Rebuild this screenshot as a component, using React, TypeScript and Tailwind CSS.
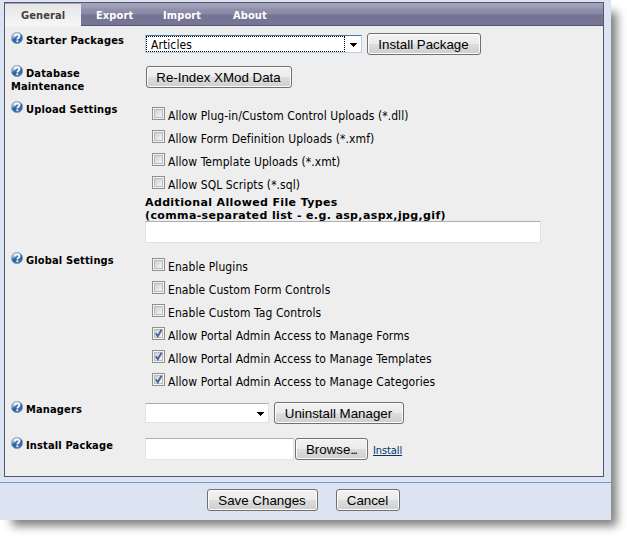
import type { ReactNode } from "react";
import clsx from "clsx";

const tabs = [
  { name: "Export", style: "ml-[15px] w-[38px]" },
  { name: "Import", style: "ml-[29px] w-[41px]" },
  { name: "About", style: "ml-[29px] w-[36px]" },
];

const uploadSettings = [
  { label: "Allow Plug-in/Custom Control Uploads (*.dll)", checked: false },
  { label: "Allow Form Definition Uploads (*.xmf)", checked: false },
  { label: "Allow Template Uploads (*.xmt)", checked: false },
  { label: "Allow SQL Scripts (*.sql)", checked: false },
];

const globalSettings = [
  { label: "Enable Plugins", checked: false },
  { label: "Enable Custom Form Controls", checked: false },
  { label: "Enable Custom Tag Controls", checked: false },
  { label: "Allow Portal Admin Access to Manage Forms", checked: true },
  { label: "Allow Portal Admin Access to Manage Templates", checked: true },
  { label: "Allow Portal Admin Access to Manage Categories", checked: true },
];

function HelpIcon() {
  return (
    <svg className="inline-block mr-[3px] -mt-[7px] align-middle" width="12" height="12" viewBox="0 0 12 12">
      <defs>
        <linearGradient id="help" x1="0" y1="0" x2="0.5" y2="1">
          <stop offset="0" stopColor="#e4ebf3" />
          <stop offset="0.4" stopColor="#8fabca" />
          <stop offset="0.6" stopColor="#2b60a4" />
          <stop offset="1" stopColor="#3a74b6" />
        </linearGradient>
      </defs>
      <circle cx="6" cy="6" r="5.7" fill="url(#help)" stroke="#7797bd" strokeWidth="0.6" />
      <path d="M3.6 4.5C3.8 2.9 4.8 2.3 6.1 2.3c1.4 0 2.4.7 2.4 1.9 0 1.5-2.2 1.6-2.2 3.3" fill="none" stroke="#fff" strokeWidth="1.8" />
      <rect x="5.4" y="8.4" width="1.9" height="1.7" fill="#fff" />
    </svg>
  );
}

function Row({ label, className, children }: { label: ReactNode; className: string; children: ReactNode }) {
  return (
    <div className={clsx("flex", className)}>
      <div className="w-[134px] shrink-0 pt-[8px] text-[11px] leading-[13px] font-bold tracking-[0.15px]">
        <HelpIcon />
        {label}
      </div>
      <div className="grow">{children}</div>
    </div>
  );
}

function Button({ className, children }: { className: string; children: ReactNode }) {
  return (
    <button
      className={clsx(
        "h-[22px] shrink-0 rounded-[3px] border border-[#707070] bg-[linear-gradient(#f2f2f2,#ebebeb_50%,#dddddd_50%,#cfcfcf)] pt-[2px] pr-[1px] text-center font-['Liberation_Sans',Arial,sans-serif] text-[13.33px] leading-[18px] whitespace-nowrap shadow-[inset_0_0_0_1px_#fcfcfc]",
        className,
      )}
    >
      {children}
    </button>
  );
}

function Checkbox({ label, checked }: { label: string; checked: boolean }) {
  return (
    <label className="flex h-[23px] pl-[7px]">
      <span className="h-[13px] w-[13px] shrink-0 border border-[#8e8f8f] bg-[#f4f4f4] p-[1px]">
        <span className="block h-[9px] w-[9px] border border-[#b8bcc2] bg-linear-to-br from-[#cbcfd5] to-[#f6f6f6]">
          {checked && (
            <svg className="-mt-[1px]" width="8" height="9" viewBox="0 0 8 9">
              <path d="M0.8 4.3L2.8 7.2L6.5 0.8" fill="none" stroke="#4a5f97" strokeWidth="1.8" />
            </svg>
          )}
        </span>
      </span>
      <span className="ml-[3px] pt-[2px] text-[12px] leading-[15px] tracking-[0.08px] whitespace-nowrap">{label}</span>
    </label>
  );
}

function Arrow() {
  return (
    <svg width="7" height="4" viewBox="0 0 7 4" shapeRendering="crispEdges">
      <path d="M0 0h7v1H6v1H5v1H4v1H3V3H2V2H1V1H0z" fill="#000" />
    </svg>
  );
}

export default function App() {
  return (
    <div className="h-[536px] w-[627px] overflow-hidden bg-white font-['DejaVu_Sans_Condensed','DejaVu_Sans',Tahoma,sans-serif] text-black">
      <div className="flex h-[520px] w-[611px] flex-col bg-[#dde4f1] shadow-[9px_9px_9px_-3px_#808080]">
        <div className="mt-[2px] ml-[4px] flex h-[475px] w-[600px] flex-col border border-[#555570] bg-[#eeeeee]">
          <div className="flex h-[23px] shrink-0 border-b border-[#55556f] bg-[linear-gradient(#a5a4bd_0,#9c9bb5_5px,#9291ac_6px,#8988a5_11px,#747394_12px,#777696_22px)] pt-[1px] text-[11px] leading-[24px] font-bold tracking-[0.1px] text-white">
            <div className="h-[22px] w-[76px] bg-linear-to-b from-[#e6e6e6] to-[#f6f6f6] pl-[16px] text-[#404040]">
              General
            </div>
            {tabs.map((tab) => (
              <div key={tab.name} className={tab.style}>
                {tab.name}
              </div>
            ))}
          </div>

          <div className="pl-[6px]">
            <Row label="Starter Packages" className="h-[33px]">
              <div className="flex pt-[7px]">
                <div className="mt-[2px] flex h-[18px] w-[217px] border border-[#b5cfe7] border-t-[#3d7bad] bg-white">
                  <div className="w-[199px] border border-dotted border-black pl-[4px] text-[12px] leading-[16px] tracking-[0.08px]">
                    Articles
                  </div>
                  <div className="flex grow items-center justify-center pt-[2px]">
                    <Arrow />
                  </div>
                </div>
                <Button className="ml-[5px] w-[114px]">Install Package</Button>
              </div>
            </Row>

            <Row label={<>Database<br />Maintenance</>} className="h-[36px]">
              <div className="flex pt-[7px] pl-[1px]">
                <Button className="w-[146px]">Re-Index XMod Data</Button>
              </div>
            </Row>

            <Row label="Upload Settings" className="h-[151px]">
              <div className="pt-[12px]">
                {uploadSettings.map((item) => (
                  <Checkbox key={item.label} label={item.label} checked={item.checked} />
                ))}
              </div>
              <div className="-mt-[3px] h-[25px] font-['DejaVu_Sans',Verdana,sans-serif] text-[11px] leading-[13px] font-bold tracking-[0.37px] whitespace-nowrap">
                Additional Allowed File Types
                <br />
                (comma-separated list - e.g. asp,aspx,jpg,gif)
              </div>
              <div className="h-[22px] w-[396px] border border-[#e2e3ea] border-t-[#abadb3] bg-white" />
            </Row>

            <Row label="Global Settings" className="h-[149px]">
              <div className="pt-[12px]">
                {globalSettings.map((item) => (
                  <Checkbox key={item.label} label={item.label} checked={item.checked} />
                ))}
              </div>
            </Row>

            <Row label="Managers" className="h-[36px]">
              <div className="flex pt-[7px]">
                <div className="mt-[1px] flex h-[20px] w-[124px] items-center justify-end border border-[#e2e3ea] border-t-[#abadb3] bg-white pt-[2px] pr-[4px]">
                  <Arrow />
                </div>
                <Button className="ml-[5px] w-[130px]">Uninstall Manager</Button>
              </div>
            </Row>

            <Row label="Install Package" className="h-[44px]">
              <div className="flex pt-[7px]">
                <div className="h-[22px] w-[149px] border border-[#e2e3ea] border-t-[#abadb3] bg-white" />
                <Button className="ml-[1px] w-[73px]">
                  Browse<span className="tracking-[-1.8px]">...</span>
                </Button>
                <a className="ml-[5px] pt-[5px] text-[11px] leading-[15px] tracking-[-0.1px] text-[#003366] underline">Install</a>
              </div>
            </Row>
          </div>
        </div>

        <div className="mt-[5px] flex grow border-t border-[#7594cf] pt-[6px] pl-[207px]">
          <Button className="w-[111px]">Save Changes</Button>
          <Button className="ml-[18px] w-[64px]">Cancel</Button>
        </div>
      </div>
    </div>
  );
}
